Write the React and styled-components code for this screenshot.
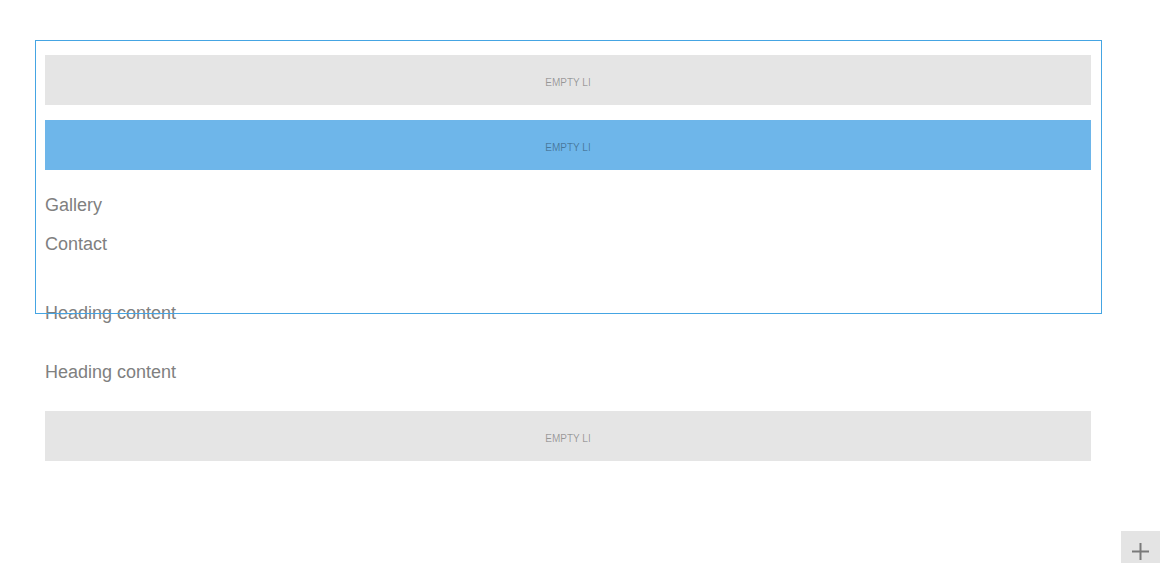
import React from "react";
import styled, { createGlobalStyle } from "styled-components";

const GlobalStyle = createGlobalStyle`
  html, body {
    margin: 0;
    padding: 0;
    background: #ffffff;
    font-family: "Liberation Sans", Arial, sans-serif;
  }
  * {
    box-sizing: border-box;
  }
`;

const Page = styled.div`
  position: relative;
  width: 1160px;
  height: 563px;
  overflow: hidden;
  padding: 55px 0 0 45px;
`;

const Column = styled.div`
  display: flex;
  flex-direction: column;
  width: 1046px;
`;

const EmptyItem = styled.div`
  display: flex;
  align-items: center;
  justify-content: center;
  height: 50px;
  margin-top: ${(p) => p.$top || 0}px;
  background: ${(p) => (p.$active ? "#6eb6ea" : "#e5e5e5")};
  color: rgba(0, 0, 0, 0.35);
  font-size: 10px;
  text-transform: uppercase;
  padding-top: 4px;
`;

const NavLink = styled.div`
  font-size: 18px;
  line-height: 21px;
  color: #808080;
  margin-top: ${(p) => p.$top}px;
`;

const Heading = styled.div`
  font-size: 18px;
  line-height: 21px;
  color: #808080;
  margin-top: ${(p) => p.$top}px;
`;

// selection frame drawn over the nav block
const SelectionFrame = styled.div`
  position: absolute;
  left: 35px;
  top: 40px;
  width: 1067px;
  height: 274px;
  border: 1px solid #45a5e3;
  pointer-events: none;
`;

const AddButton = styled.button`
  position: absolute;
  left: 1121px;
  top: 531px;
  width: 39px;
  height: 40px;
  border: none;
  padding: 12px 0 0;
  background: #e4e4e4;
  display: flex;
  align-items: flex-start;
  justify-content: center;
  cursor: pointer;
`;

const App = () => {
  return (
    <>
      <GlobalStyle />
      <Page>
        <Column>
          <EmptyItem>Empty li</EmptyItem>
          <EmptyItem $active $top={15}>Empty li</EmptyItem>
          <NavLink $top={25}>Gallery</NavLink>
          <NavLink $top={18}>Contact</NavLink>
          <Heading $top={48}>Heading content</Heading>
          <Heading $top={38}>Heading content</Heading>
          <EmptyItem $top={28}>Empty li</EmptyItem>
        </Column>
        <SelectionFrame />
        <AddButton aria-label="add">
          <svg width="17" height="17" viewBox="0 0 17 17">
            <path d="M8.5 0v17M0 8.5h17" stroke="#7a7a7a" strokeWidth="2" fill="none" />
          </svg>
        </AddButton>
      </Page>
    </>
  );
};

export default App;
